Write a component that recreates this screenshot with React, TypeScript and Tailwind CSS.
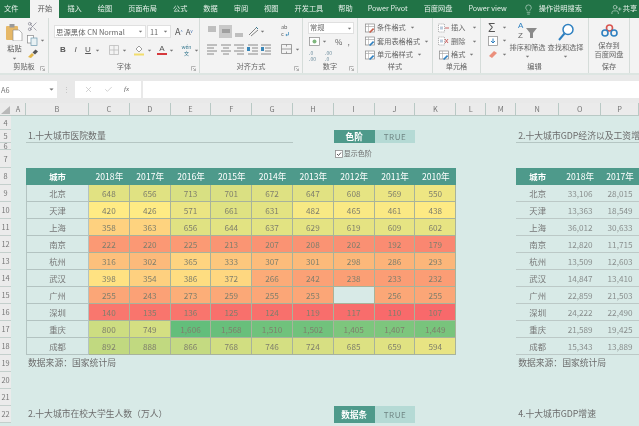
import { Fragment, type ReactNode } from 'react';
import { Lightbulb, Scissors, UserPlus, X, Check } from 'lucide-react';

const years = ['2018年', '2017年', '2016年', '2015年', '2014年', '2013年', '2012年', '2011年', '2010年'];
const colLetters = ['C', 'D', 'E', 'F', 'G', 'H', 'I', 'J', 'K'];

const heat: [string, (number | null)[]][] = [
  ['北京', [648, 656, 713, 701, 672, 647, 608, 569, 550]],
  ['天津', [420, 426, 571, 661, 631, 482, 465, 461, 438]],
  ['上海', [358, 363, 656, 644, 637, 629, 619, 609, 602]],
  ['南京', [222, 220, 225, 213, 207, 208, 202, 192, 179]],
  ['杭州', [316, 302, 365, 333, 307, 301, 298, 286, 293]],
  ['武汉', [398, 354, 386, 372, 266, 242, 238, 233, 232]],
  ['广州', [255, 243, 273, 259, 255, 253, null, 256, 255]],
  ['深圳', [140, 135, 136, 125, 124, 119, 117, 110, 107]],
  ['重庆', [800, 749, 1606, 1568, 1510, 1502, 1405, 1407, 1449]],
  ['成都', [892, 888, 866, 768, 746, 724, 685, 659, 594]],
];

const gdp: [string, string][] = [
  ['33,106', '28,015'],
  ['13,363', '18,549'],
  ['36,012', '30,633'],
  ['12,820', '11,715'],
  ['13,509', '12,603'],
  ['14,847', '13,410'],
  ['22,859', '21,503'],
  ['24,222', '22,490'],
  ['21,589', '19,425'],
  ['15,343', '13,889'],
];

// excel 3-colour scale
const mix = (a: number[], b: number[], t: number) => a.map((v, i) => Math.round(v + (b[i] - v) * t));
const scale = (v: number) => {
  const red = [248, 105, 107];
  const yellow = [255, 235, 132];
  const green = [99, 190, 123];
  const c = v <= 420 ? mix(red, yellow, (v - 107) / 313) : mix(yellow, green, (v - 420) / 1186);
  return `rgb(${c[0]},${c[1]},${c[2]})`;
};

function Chev({ className = '' }: { className?: string }) {
  return (
    <svg width="5" height="3" viewBox="0 0 5 3" className={`shrink-0 ${className}`}>
      <path d="M0 0h5L2.5 3z" fill="#777" />
    </svg>
  );
}

function Lines({ d, color = '#8a8a8a', size = 12 }: { d: number[][]; color?: string; size?: number }) {
  return (
    <svg width={size} height={size} viewBox="0 0 12 12" className="shrink-0">
      {d.map((l, i) => (
        <line key={i} x1={l[0]} x2={l[1]} y1={l[2]} y2={l[2]} stroke={color} strokeWidth="1" />
      ))}
    </svg>
  );
}

function Group({ w, label, launcher, children }: { w: string; label: string; launcher?: boolean; children: ReactNode }) {
  return (
    <div className={`${w} h-full shrink-0 flex flex-col border-r border-[#d5dcd9]`}>
      <div className="flex-1 min-h-0">{children}</div>
      <div className="h-[12px] relative flex items-center justify-center text-[7.2px] leading-none text-[#666]">
        {label}
        {launcher && (
          <svg width="5" height="5" viewBox="0 0 5 5" className="absolute right-[3px] bottom-[2px]">
            <path d="M.5 4.5v-4h4M2 2l2.5 2.5M4.5 2.5v2h-2" fill="none" stroke="#999" strokeWidth=".7" />
          </svg>
        )}
      </div>
    </div>
  );
}

function StyleRow({ icon, text, pad = 'pl-[7px]', chev = 'ml-[2px]' }: { icon: ReactNode; text: string; pad?: string; chev?: string }) {
  return (
    <div className={`h-[13.5px] flex items-center gap-[2px] ${pad} text-[7.2px] text-[#666] leading-none whitespace-nowrap`}>
      {icon}
      <span>{text}</span>
      <Chev className={`${chev} scale-75`} />
    </div>
  );
}

function TableIcon({ accent }: { accent: string }) {
  return (
    <svg width="10" height="10" viewBox="0 0 10 10" className="shrink-0">
      <rect x=".5" y="1" width="9" height="8" fill="#fff" stroke="#888" strokeWidth=".7" />
      <line x1=".5" x2="9.5" y1="3.5" y2="3.5" stroke="#999" strokeWidth=".6" />
      <line x1="3.5" x2="3.5" y1="1" y2="9" stroke="#aaa" strokeWidth=".6" />
      <path d="M4 9l4-4 1.2 1.2-4 3.8z" fill={accent} />
    </svg>
  );
}

function CellIcon({ mark }: { mark: string }) {
  return (
    <svg width="11" height="10" viewBox="0 0 11 10" className="shrink-0">
      <rect x=".5" y="1" width="6" height="8" fill="#fff" stroke="#999" strokeWidth=".7" strokeDasharray="1.2 .8" />
      <rect x="2" y="3.5" width="3" height="3" fill="#bcd" />
      <path d={mark} stroke="#c66" strokeWidth="1" fill="none" />
    </svg>
  );
}

function Ribbon() {
  return (
    <div className="h-[57px] shrink-0 flex bg-[#f3f3f3] border-b-2 border-[#dde5e2]">
      <Group w="w-[49px]" label="剪贴板" launcher>
        <div className="flex h-full">
          <div className="w-[25px] pl-[4px] pt-[5px] flex flex-col items-center text-[7.2px] leading-none text-[#555]">
            <svg width="17" height="18" viewBox="0 0 17 18">
              <rect x="0" y="3" width="12" height="14" rx="1" fill="#e6b868" />
              <rect x="3.5" y="1" width="5" height="3.5" fill="#9a9a9a" />
              <path d="M7 7h6l3 3v8H7z" fill="#fff" stroke="#888" strokeWidth=".6" />
            </svg>
            <span className="mt-[4px]">粘贴</span>
            <Chev className="mt-[5px] scale-75" />
          </div>
          <div className="flex-1 pt-[3px] pl-[2px] flex flex-col gap-[3px]">
            <Scissors size={11} strokeWidth={1.2} color="#667" />
            <div className="flex items-center gap-[2px]">
              <svg width="11" height="11" viewBox="0 0 11 11">
                <rect x=".5" y=".5" width="6" height="7.5" fill="#fff" stroke="#888" strokeWidth=".7" />
                <rect x="4" y="3" width="6" height="7.5" fill="#e8f1f4" stroke="#6d97ad" strokeWidth=".7" />
              </svg>
              <Chev className="scale-75" />
            </div>
            <svg width="12" height="10" viewBox="0 0 12 10">
              <path d="M1 8l4-4 2 2-3 3z" fill="#e3b64a" />
              <path d="M5.5 3.5l3-3 2.5 2-3 3z" fill="#555" />
            </svg>
          </div>
        </div>
      </Group>

      <Group w="w-[151px]" label="字体" launcher>
        <div className="pl-[5px] pt-[7px]">
          <div className="flex items-center h-[13px]">
            <div className="w-[92px] h-full bg-white border border-[#e0e0e0] flex items-center justify-between px-[1px] text-[7.4px] text-[#666] whitespace-nowrap leading-none">
              <span>思源黑体 CN Normal</span>
              <Chev className="mr-[1px] scale-75" />
            </div>
            <div className="w-[24px] h-full ml-[1px] bg-white border border-[#e0e0e0] flex items-center justify-between pl-[2px] pr-[2px] text-[7.4px] text-[#666] leading-none">
              <span>11</span>
              <Chev className="scale-75" />
            </div>
            <span className="ml-[4px] text-[9px] leading-none text-[#555]">A<sup className="text-[4px] text-[#36a]">^</sup></span>
            <span className="ml-[3px] text-[8px] leading-none text-[#555]">A<sup className="text-[4px] text-[#36a]">v</sup></span>
          </div>
          <div className="flex items-center h-[12px] mt-[6px] pl-[3px] text-[#555] font-['Liberation_Sans',sans-serif] text-[8px] leading-none">
            <b className="w-[12px] text-center">B</b>
            <i className="w-[13px] text-center">I</i>
            <u className="w-[12px] text-center">U</u>
            <Chev className="ml-[1px] scale-75" />
            <svg width="10" height="10" viewBox="0 0 10 10" className="ml-[9px]">
              <path d="M.5.5h9v9h-9zM5 .5v9M.5 5h9" fill="none" stroke="#bbb" strokeWidth=".8" />
            </svg>
            <Chev className="ml-[3px] scale-75" />
            <svg width="12" height="12" viewBox="0 0 12 12" className="ml-[6px]">
              <path d="M3 5l3-3 3 3-3 3z" fill="#fff" stroke="#777" strokeWidth=".7" />
              <rect x="1" y="9.5" width="10" height="2" fill="#f2dd6c" />
            </svg>
            <Chev className="ml-[2px] scale-75" />
            <span className="ml-[5px] w-[10px] flex flex-col items-center text-[8px] leading-[8px]">
              A
              <span className="w-[10px] h-[2px] bg-[#d6393d]" />
            </span>
            <Chev className="ml-[2px] scale-75" />
            <span className="ml-[7px] w-[11px] text-[5px] leading-[6px] text-[#36788f] font-['Noto_Sans_CJK_SC'] text-center">wén<br />文</span>
            <Chev className="ml-[2px] scale-75" />
          </div>
        </div>
      </Group>

      <Group w="w-[103px]" label="对齐方式" launcher>
        <div className="flex pt-[6px] pl-[5px]">
          <div className="w-[68px]">
            <div className="flex items-center h-[14px]">
              <span className="w-[14px] flex justify-center"><Lines d={[[2, 10, 2], [2, 10, 4], [2, 10, 6]]} /></span>
              <span className="w-[13px] h-[13px] bg-[#c9c9c9] flex items-center justify-center"><Lines d={[[2, 10, 5], [2, 10, 7]]} color="#777" /></span>
              <span className="w-[14px] flex justify-center"><Lines d={[[2, 10, 9], [2, 10, 11]]} /></span>
              <svg width="11" height="11" viewBox="0 0 11 11" className="ml-[2px]">
                <path d="M1 9l7-7M3 10l7-6" stroke="#777" strokeWidth=".9" />
                <path d="M8 1l2 2" stroke="#36788f" strokeWidth="1" />
              </svg>
              <Chev className="ml-[1px] scale-75" />
            </div>
            <div className="flex items-center h-[14px] mt-[4px]">
              <span className="w-[14px] flex justify-center"><Lines d={[[1, 11, 2], [1, 8, 5], [1, 11, 8], [1, 8, 11]]} /></span>
              <span className="w-[13px] flex justify-center"><Lines d={[[1, 11, 2], [3, 9, 5], [1, 11, 8], [3, 9, 11]]} /></span>
              <span className="w-[14px] flex justify-center"><Lines d={[[1, 11, 2], [4, 11, 5], [1, 11, 8], [4, 11, 11]]} /></span>
              <span className="w-[13px] flex justify-center relative"><Lines d={[[1, 11, 2], [5, 11, 5], [5, 11, 8], [1, 11, 11]]} /><span className="absolute left-[1px] top-[4px] w-[3px] h-[4px] bg-[#3a87b8]" /></span>
              <span className="w-[13px] flex justify-center relative"><Lines d={[[1, 11, 2], [5, 11, 5], [5, 11, 8], [1, 11, 11]]} /><span className="absolute left-[2px] top-[4px] w-[3px] h-[4px] bg-[#3a87b8]" /></span>
            </div>
          </div>
          <div className="pl-[8px] flex flex-col items-start">
            <div className="h-[14px] flex flex-col text-[5.5px] leading-[7px] text-[#666]">
              <span>ab</span>
              <span className="flex items-center gap-[1px]">
                c
                <svg width="4" height="5" viewBox="0 0 4 5"><path d="M3.5 0v3H1M2 2L.8 3 2 4" fill="none" stroke="#3a87b8" strokeWidth=".7" /></svg>
              </span>
            </div>
            <div className="h-[14px] mt-[4px] flex items-center gap-[3px]">
              <svg width="11" height="10" viewBox="0 0 11 10"><path d="M.5.5h10v9H.5zM.5 5h10M5.5.5v2M5.5 7.5v2" fill="none" stroke="#888" strokeWidth=".8" /></svg>
              <Chev className="scale-75" />
            </div>
          </div>
        </div>
      </Group>

      <Group w="w-[55px]" label="数字" launcher>
        <div className="pl-[5px] pt-[4px]">
          <div className="w-[46px] h-[12px] bg-white border border-[#e0e0e0] flex items-center justify-between px-[1px] text-[7.2px] leading-none text-[#666]">
            常规<Chev className="scale-75" />
          </div>
          <div className="flex items-center h-[13px] mt-[1px] pl-[1px] text-[8px] leading-none text-[#666]">
            <svg width="11" height="9" viewBox="0 0 11 9"><rect x=".5" y=".5" width="10" height="8" fill="#fff" stroke="#888" strokeWidth=".7" /><circle cx="5.5" cy="4.5" r="2" fill="#7fb77e" /></svg>
            <Chev className="ml-[2px] scale-75" />
            <span className="ml-[8px]">%</span>
            <span className="ml-[5px]">,</span>
          </div>
          <div className="flex items-center gap-[5px] h-[13px] mt-[1px] pl-[1px] text-[5px] leading-[6px] text-[#6f8f9f]">
            <span className="w-[11px]">.0<br />.00</span>
            <span className="w-[11px]">.00<br />.0</span>
          </div>
        </div>
      </Group>

      <Group w="w-[75px]" label="样式">
        <div className="pt-[3px]">
          <StyleRow icon={<TableIcon accent="#c85f4b" />} text="条件格式" />
          <StyleRow icon={<TableIcon accent="#2f80c0" />} text="套用表格格式" />
          <StyleRow icon={<TableIcon accent="#2f80c0" />} text="单元格样式" />
        </div>
      </Group>

      <Group w="w-[48px]" label="单元格">
        <div className="pt-[3px]">
          <StyleRow pad="pl-[5px]" chev="ml-[5px]" icon={<CellIcon mark="M7 5h4" />} text="插入" />
          <StyleRow pad="pl-[5px]" chev="ml-[5px]" icon={<CellIcon mark="M7 3l3 4M10 3l-3 4" />} text="删除" />
          <StyleRow pad="pl-[6px]" icon={<TableIcon accent="#2f80c0" />} text="格式" />
        </div>
      </Group>

      <Group w="w-[108px]" label="编辑">
        <div className="flex pt-[3px] pl-[7px] h-full">
          <div className="w-[21px] flex flex-col">
            <div className="h-[13.5px] flex items-center gap-[4px]">
              <span className="w-[10px] text-[12px] leading-none text-[#555] font-['Liberation_Sans',sans-serif]">Σ</span>
              <Chev className="scale-75" />
            </div>
            <div className="h-[13.5px] flex items-center gap-[4px]">
              <svg width="10" height="10" viewBox="0 0 10 10"><rect x=".5" y=".5" width="9" height="9" fill="#fff" stroke="#888" strokeWidth=".7" /><path d="M5 2.5v4M3 5l2 2 2-2" stroke="#2f80c0" fill="none" /></svg>
              <Chev className="scale-75" />
            </div>
            <div className="h-[13.5px] flex items-center gap-[4px]">
              <svg width="10" height="10" viewBox="0 0 10 10"><path d="M1 7l5-5 3 2-5 5z" fill="#eb8f7c" /></svg>
              <Chev className="scale-75" />
            </div>
          </div>
          <div className="w-[37px] pt-[2px] flex flex-col items-center text-[7.2px] leading-none text-[#666] whitespace-nowrap">
            <div className="relative h-[19px] w-[19px]">
              <span className="absolute left-0 top-[-2px] text-[8px] leading-[10px] text-[#2f80c0] font-['Liberation_Sans',sans-serif]">A</span>
              <span className="absolute left-0 top-[8px] text-[8px] leading-[10px] text-[#666] font-['Liberation_Sans',sans-serif]">Z</span>
              <svg width="11" height="11" viewBox="0 0 11 11" className="absolute right-0 top-[5px]"><path d="M0 0h11L7 5v5H4V5z" fill="#8a8a8a" /></svg>
            </div>
            <span className="mt-[2px]">排序和筛选</span>
            <Chev className="mt-[4px] scale-75" />
          </div>
          <div className="w-[37px] ml-[1px] pt-[2px] flex flex-col items-center text-[7.2px] leading-none text-[#666] whitespace-nowrap">
            <svg width="18" height="19" viewBox="0 0 18 19">
              <circle cx="11" cy="6.5" r="5" fill="#fff" stroke="#2f80c0" strokeWidth="1.5" />
              <path d="M7.5 10.5L2 17" stroke="#2f80c0" strokeWidth="2" />
            </svg>
            <span className="mt-[2px]">查找和选择</span>
            <Chev className="mt-[4px] scale-75" />
          </div>
        </div>
      </Group>

      <Group w="w-[41px]" label="保存">
        <div className="pt-[6px] flex flex-col items-center text-[7.2px] leading-[9px] text-[#666] whitespace-nowrap">
          <svg width="17" height="14" viewBox="0 0 17 14">
            <circle cx="8.5" cy="4" r="3" fill="none" stroke="#d9534f" strokeWidth="1.6" />
            <circle cx="4" cy="9" r="3" fill="none" stroke="#2f80c0" strokeWidth="1.6" />
            <circle cx="13" cy="9" r="3" fill="none" stroke="#2f80c0" strokeWidth="1.6" />
          </svg>
          <span className="mt-[3px]">保存到</span>
          <span>百度网盘</span>
        </div>
      </Group>
    </div>
  );
}

function RowHead({ n }: { n: number }) {
  return (
    <div className="bg-[#ebebeb] border-b border-[#c4cfcc] flex items-center justify-center overflow-hidden text-[7.4px] leading-none text-[#777]">
      {n}
    </div>
  );
}

function Toggle({ label }: { label: string }) {
  return (
    <>
      <div className="bg-[#4e9a8b] flex items-center justify-center text-[8.6px] font-bold leading-none text-white">{label}</div>
      <div className="bg-[#b5dad5] flex items-center justify-center text-[8px] tracking-[0.5px] leading-none text-[#6f8583]">TRUE</div>
    </>
  );
}

function Title({ span, children }: { span: string; children: ReactNode }) {
  return (
    <div className={`${span} flex items-center pl-[2px] whitespace-nowrap overflow-hidden text-[8.8px] leading-none text-[#6d6d6d]`}>
      {children}
    </div>
  );
}

function Sheet() {
  return (
    <div className="flex-1 min-h-0 overflow-hidden grid grid-cols-[11px_15px_63px_repeat(9,40.8px)_30px_30px_43px_42px_1fr] grid-rows-[13px_14px_13px_7px_18px_repeat(15,17px)] bg-[#d8eae7] font-['Noto_Sans_CJK_SC',sans-serif]">
      {/* column letters */}
      <div className="bg-[#ebebeb] border-b border-[#b9c9c5] flex items-end justify-center pb-[1px]">
        <svg width="9" height="8" viewBox="0 0 9 8"><path d="M9 0v8H0z" fill="#b8b8b8" /></svg>
      </div>
      {['A', 'B', ...colLetters, 'L', 'M', 'N', 'O', 'P'].map((c) => (
        <div key={c} className="bg-[#ebebeb] border-b border-r border-[#b9c9c5] flex items-center justify-center text-[7.4px] leading-none text-[#777]">
          {c}
        </div>
      ))}

      {/* rows 4-7 */}
      <RowHead n={4} />
      <div className="col-span-16" />

      <RowHead n={5} />
      <div />
      <Title span="col-span-6 border-b border-[#b5c6c3]">1.十大城市医院数量</Title>
      <div />
      <Toggle label="色阶" />
      <div className="col-span-3" />
      <Title span="col-span-3 border-b border-[#b5c6c3]">2.十大城市GDP经济以及工资增</Title>

      <RowHead n={6} />
      <div className="col-span-16" />

      <RowHead n={7} />
      <div className="col-span-8" />
      <div className="col-span-8 -mt-[1px] flex items-start gap-[1px] pl-[1px] text-[7px] leading-[9px] text-[#6d6d6d]">
        <svg width="8" height="8" viewBox="0 0 8 8" className="shrink-0 mt-[0.5px]">
          <rect x=".5" y=".5" width="7" height="7" fill="#fff" stroke="#8d8d8d" strokeWidth=".8" />
          <path d="M2 4l1.5 1.5L6 2.5" fill="none" stroke="#444" strokeWidth=".9" />
        </svg>
        显示色阶
      </div>

      {/* table header */}
      <RowHead n={8} />
      <div />
      <div className="bg-[#4e9a8b] flex items-center justify-center text-[8.4px] font-bold leading-none text-white">城市</div>
      {years.map((y) => (
        <div key={y} className="bg-[#4e9a8b] flex items-center justify-center text-[8.6px] leading-none text-white">{y}</div>
      ))}
      <div className="col-span-2" />
      <div className="bg-[#4e9a8b] flex items-center justify-center text-[8.4px] font-bold leading-none text-white">城市</div>
      <div className="bg-[#4e9a8b] flex items-center justify-center text-[8.6px] leading-none text-white">2018年</div>
      <div className="bg-[#4e9a8b] flex items-center justify-center text-[8.6px] leading-none text-white">2017年</div>

      {heat.map(([city, vals], r) => (
        <Fragment key={city}>
          <RowHead n={9 + r} />
          <div />
          <div className="border border-t-0 border-[#b3c3c1] flex items-center justify-center text-[8.4px] leading-none text-[#777]">{city}</div>
          {vals.map((v, i) => (
            <div
              key={i}
              className="border-r border-b border-[#a8b39b] flex items-center justify-center text-[8.2px] leading-none text-[#7f7f6c]"
              style={v === null ? undefined : { backgroundColor: scale(v) }}
            >
              {v === null ? '' : v.toLocaleString('en-US')}
            </div>
          ))}
          <div className="col-span-2" />
          <div className="border-b border-[#bcc9c7] flex items-center justify-center text-[8.4px] leading-none text-[#777]">{city}</div>
          <div className="border-b border-[#bcc9c7] flex items-center justify-center text-[8.2px] leading-none text-[#8a8f8e]">{gdp[r][0]}</div>
          <div className="border-b border-[#bcc9c7] flex items-center justify-center text-[8.2px] leading-none text-[#8a8f8e]">{gdp[r][1]}</div>
        </Fragment>
      ))}

      <RowHead n={19} />
      <div />
      <Title span="col-span-6">数据来源：国家统计局</Title>
      <div className="col-span-6" />
      <Title span="col-span-3">数据来源：国家统计局</Title>

      <RowHead n={20} />
      <div className="col-span-16" />
      <RowHead n={21} />
      <div className="col-span-16" />

      <RowHead n={22} />
      <div />
      <Title span="col-span-6">2.十大城市在校大学生人数（万人）</Title>
      <div />
      <Toggle label="数据条" />
      <div className="col-span-3" />
      <Title span="col-span-3">4.十大城市GDP增速</Title>
    </div>
  );
}

export default function App() {
  return (
    <div className="w-[639px] h-[426px] overflow-hidden flex flex-col blur-[0.3px] font-['Noto_Sans_CJK_SC','Liberation_Sans',sans-serif]">
      {/* tabs */}
      <div className="h-[18px] shrink-0 flex items-center bg-[#217346] text-[7.2px] leading-none text-[#e6f0ea] whitespace-nowrap">
        <span className="ml-[4px]">文件</span>
        <span className="ml-[12px] w-[29px] h-full bg-[#f3f3f3] flex items-center justify-center text-[#555]">开始</span>
        <span className="ml-[8px]">插入</span>
        <span className="ml-[16px]">绘图</span>
        <span className="ml-[16px]">页面布局</span>
        <span className="ml-[16px]">公式</span>
        <span className="ml-[16px]">数据</span>
        <span className="ml-[16px]">审阅</span>
        <span className="ml-[16px]">视图</span>
        <span className="ml-[16px]">开发工具</span>
        <span className="ml-[15px]">帮助</span>
        <span className="ml-[15px]">Power Pivot</span>
        <span className="ml-[16px]">百度网盘</span>
        <span className="ml-[16px]">Power view</span>
        <Lightbulb size={11} strokeWidth={1.2} className="ml-[16px]" />
        <span className="ml-[5px]">操作说明搜索</span>
        <UserPlus size={11} strokeWidth={1.2} className="ml-[29px]" />
        <span className="ml-[1px]">共享</span>
      </div>

      <Ribbon />

      {/* formula bar */}
      <div className="h-[28px] shrink-0 flex items-center bg-[#e9e9e9] pb-[1px] pt-[2px] text-[#777]">
        <div className="w-[57px] h-[17px] bg-white flex items-center justify-between pl-[1px] pr-[3px] text-[7.4px] leading-none">
          A6<Chev className="scale-90" />
        </div>
        <div className="w-[18px] text-center text-[7px] leading-none text-[#bbb]">⋮</div>
        <div className="w-[66px] h-[17px] bg-white flex items-center pl-[9px] gap-[11px]">
          <X size={9} color="#c4c4c4" />
          <Check size={9} color="#c4c4c4" />
          <i className="text-[7px] leading-none font-['Liberation_Serif',serif] text-[#666]">fx</i>
        </div>
        <div className="ml-[2px] flex-1 h-[17px] bg-white" />
      </div>

      <Sheet />
    </div>
  );
}
